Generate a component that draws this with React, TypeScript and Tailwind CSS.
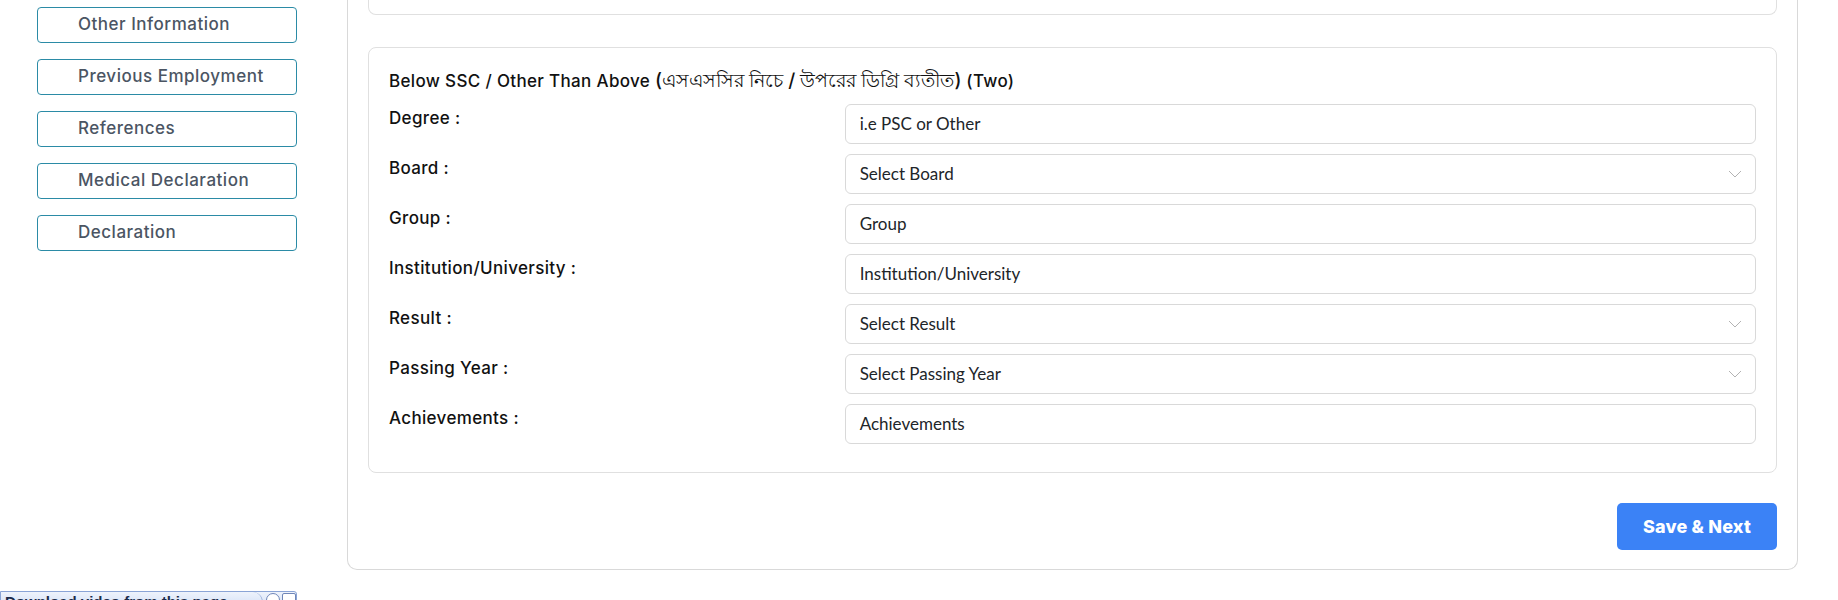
const SIDE_LINKS = ['Other Information', 'Previous Employment', 'References', 'Medical Declaration', 'Declaration'];

type Field = { label: string; text: string; select?: boolean };

const FIELDS: Field[] = [
  { label: 'Degree :', text: 'i.e PSC or Other' },
  { label: 'Board :', text: 'Select Board', select: true },
  { label: 'Group :', text: 'Group' },
  { label: 'Institution/University :', text: 'Institution/University' },
  { label: 'Result :', text: 'Select Result', select: true },
  { label: 'Passing Year :', text: 'Select Passing Year', select: true },
  { label: 'Achievements :', text: 'Achievements' },
];

const POP = "font-['Inter','Noto_Sans',sans-serif]";

function Chevron() {
  return (
    <svg width="14" height="8" viewBox="0 0 14 8" fill="none" className="mr-[3px]">
      <polyline points="1,1 7,7 13,1" stroke="#b3b3b3" strokeWidth="1" />
    </svg>
  );
}

function FieldRow({ f }: { f: Field }) {
  return (
    <div className="grid grid-cols-3">
      <div className={`${POP} pt-[2px] text-[17px] leading-[24px] font-medium tracking-[0.02em] text-[#111]`}>{f.label}</div>
      <div className="col-span-2 flex h-[40px] items-center justify-between rounded-[6px] border border-[#d9d9d9] bg-white pl-[14px] pr-[10px] font-['Lato','Open_Sans',sans-serif] text-[17px] text-[#212529]">
        <span>{f.text}</span>
        {f.select && <Chevron />}
      </div>
    </div>
  );
}

export default function App() {
  return (
    <div className="relative flex h-[600px] w-[1838px] overflow-hidden bg-white">
      {/* left step menu */}
      <aside className="w-[347px] shrink-0 pl-[37px] pt-[7px]">
        <div className="flex flex-col gap-[16px]">
          {SIDE_LINKS.map((l) => (
            <button
              key={l}
              className={`${POP} h-[36px] w-[260px] rounded-[4px] border border-[#2b8ba6] pl-[40px] text-left text-[17px] font-medium tracking-[0.03em] text-[#4b5563]`}
            >
              {l}
            </button>
          ))}
        </div>
      </aside>

      {/* main form panel (scrolled, top is above the viewport) */}
      <main className="h-[570px] w-[1451px] shrink-0 rounded-b-[10px] border-x border-b border-[#d9d9d9] px-[20px]">
        <div className="h-[15px] rounded-b-[8px] border-x border-b border-[#e0e0e0]" />

        <section className="mt-[32px] rounded-[8px] border border-[#e0e0e0] px-[20px] pb-[28px] pt-[20px]">
          <h3 className={`${POP} mb-[10px] text-[17px] leading-[25px] font-medium tracking-[0.02em] text-[#111]`}>
            Below SSC / Other Than Above <span className="text-[19px] tracking-normal">(এসএসসির নিচে / উপরের ডিগ্রি ব্যতীত)</span> (Two)
          </h3>
          <div className="flex flex-col gap-[10px]">
            {FIELDS.map((f) => (
              <FieldRow key={f.label} f={f} />
            ))}
          </div>
        </section>

        <div className="mt-[30px] flex justify-end">
          <button className={`${POP} h-[47px] w-[160px] rounded-[5px] bg-[#3b82f6] text-[18px] font-extrabold tracking-[0.01em] text-white`}>
            Save &amp; Next
          </button>
        </div>
      </main>

      {/* browser add-on bar peeking in at the bottom */}
      <div className="absolute left-0 top-[591px] flex h-[20px] w-[297px] items-start rounded-tr-[3px] border border-[#8aa4d6] bg-gradient-to-b from-[#eef3fc] to-[#cfdcf4]">
        <span className="flex-1 overflow-hidden whitespace-nowrap rounded-r-full border-r border-[#9fb4dc] pl-[4px] font-['Liberation_Sans',Arial,sans-serif] text-[15px] font-bold leading-[20px] text-[#1b2b4a]">
          Download video from this page
        </span>
        <span className="ml-[3px] mt-[1px] h-[14px] w-[14px] rounded-full border border-[#6f86b8] bg-white" />
        <span className="ml-[2px] mt-[1px] h-[14px] w-[14px] rounded-[2px] border border-[#6f86b8] bg-white" />
      </div>
    </div>
  );
}
